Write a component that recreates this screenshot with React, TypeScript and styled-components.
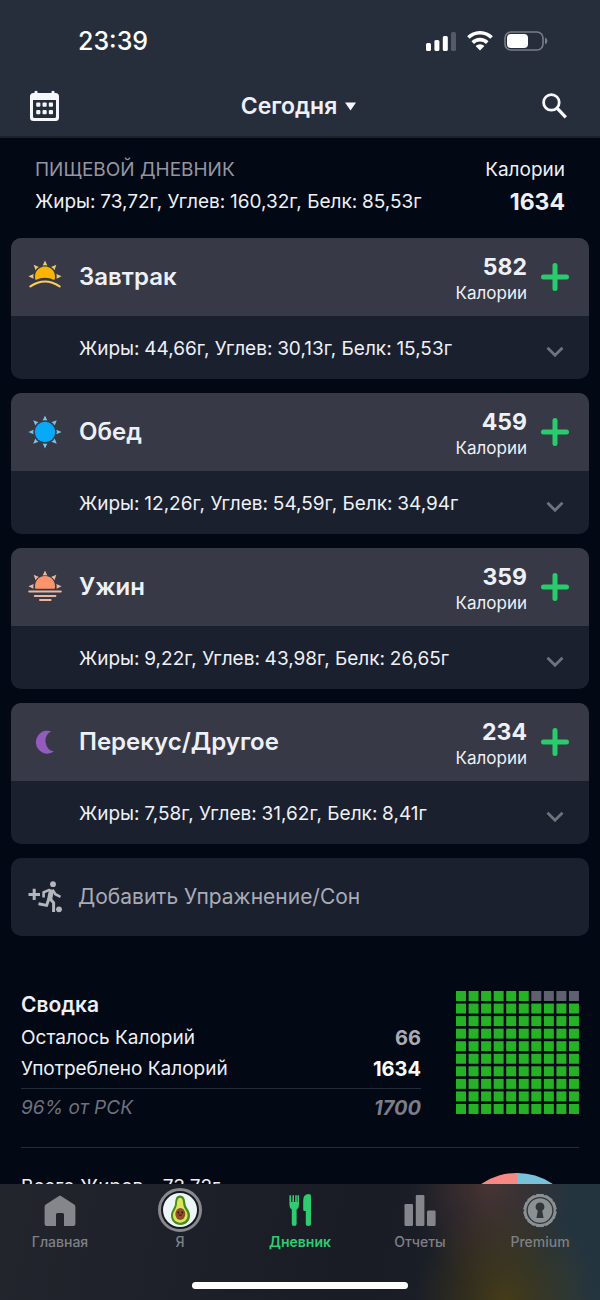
import React from "react";
import styled, { createGlobalStyle } from "styled-components";

const GlobalStyle = createGlobalStyle`
  * { box-sizing: border-box; }
  html, body, #root { height: 100%; }
  body {
    margin: 0;
    background: #020814;
    color: #eef0f8;
    font-family: Inter, "Liberation Sans", sans-serif;
    font-size: 19px;
    line-height: 24px;
  }
  button {
    margin: 0;
    padding: 0;
    border: 0;
    background: none;
    color: inherit;
    font: inherit;
    cursor: pointer;
  }
  svg { display: block; flex: none; }
  h1, h2, h3, p, dl, dd, dt { margin: 0; font: inherit; }
`;

const Screen = styled.div`
  display: flex;
  flex-direction: column;
  height: 100vh;
`;

const TopBar = styled.header`
  flex: none;
  background: #272e3b;
  border-bottom: 2px solid #1b212d;
`;

const StatusBar = styled.div`
  display: flex;
  align-items: center;
  justify-content: space-between;
  padding: 26px 52px 0 78px;
  height: 56px;
`;

const Clock = styled.time`
  font-size: 25px;
  line-height: 30px;
  font-weight: 500;
  color: #fff;
`;

const StatusIcons = styled.div`
  display: flex;
  align-items: center;
  gap: 11px;
`;

const Toolbar = styled.div`
  display: grid;
  grid-template-columns: 1fr auto 1fr;
  align-items: center;
  height: 80px;
  padding: 20px 33px 0 30px;
`;

const IconButton = styled.button<{ $end?: boolean }>`
  justify-self: ${(p) => (p.$end ? "end" : "start")};
`;

const DateButton = styled.button`
  display: flex;
  align-items: center;
  gap: 8px;
  font-size: 23px;
  line-height: 28px;
  font-weight: 600;
`;

const Scroll = styled.main`
  flex: 1;
  min-height: 0;
  overflow-y: auto;
  scrollbar-width: none;
`;

const DiaryHead = styled.section`
  display: flex;
  justify-content: space-between;
  padding: 20px 35px 24px;
`;

const HeadColumn = styled.div<{ $end?: boolean }>`
  display: flex;
  flex-direction: column;
  gap: 8px;
  text-align: ${(p) => (p.$end ? "right" : "left")};
`;

const Caption = styled.h2`
  color: #9496a1;
`;

const DayTotal = styled.p`
  font-size: 23px;
  font-weight: 700;
`;

const MealList = styled.div`
  display: flex;
  flex-direction: column;
  gap: 14px;
  padding: 0 11px;
`;

const Card = styled.section`
  overflow: hidden;
  border-radius: 10px;
  background: #1a202d;
`;

const CardHead = styled.div`
  display: flex;
  align-items: center;
  height: 78px;
  padding: 0 20px 0 17px;
  background: #373a46;
`;

const MealName = styled.h3`
  flex: 1;
  margin-left: 17px;
  font-size: 24px;
  line-height: 30px;
  font-weight: 600;
`;

const MealTotal = styled.div`
  padding-top: 4px;
  margin-right: 14px;
  text-align: right;
`;

const MealCalories = styled.p`
  font-size: 23px;
  line-height: 28px;
  font-weight: 700;
`;

const Unit = styled.p`
  font-size: 17px;
`;

const CardBody = styled.div`
  display: flex;
  align-items: center;
  justify-content: space-between;
  height: 63px;
  padding: 2px 25px 0 68px;
`;

const ExpandButton = styled.button`
  padding-top: 6px;
`;

const ExerciseButton = styled.button`
  display: flex;
  align-items: center;
  gap: 16px;
  height: 78px;
  padding: 0 17px;
  border-radius: 10px;
  background: #1a202d;
  color: #a9abb7;
  font-size: 21px;
  text-align: left;
`;

const Summary = styled.section`
  display: flex;
  gap: 35px;
  margin: 55px 21px 0;
  padding-bottom: 20px;
  border-bottom: 1px solid #262c38;
`;

const SummaryText = styled.div`
  flex: 1;
`;

const SummaryTitle = styled.h2`
  margin-bottom: 3px;
  font-size: 21px;
  line-height: 28px;
  font-weight: 600;
`;

const SummaryRow = styled.div<{ $muted?: boolean; $goal?: boolean }>`
  display: flex;
  align-items: center;
  justify-content: space-between;
  height: ${(p) => (p.$goal ? 39 : 31)}px;
  border-top: ${(p) => (p.$goal ? "1px solid #262c38" : "0")};
  margin-top: ${(p) => (p.$goal ? "4px" : "0")};
  color: ${(p) => (p.$goal ? "#6f727e" : "inherit")};
  font-style: ${(p) => (p.$goal ? "italic" : "normal")};

  dd {
    font-size: 20px;
    font-weight: 700;
    color: ${(p) => (p.$muted ? "#a9abb7" : p.$goal ? "#7b7d88" : "#fff")};
  }
`;

const Macros = styled.section`
  display: flex;
  justify-content: space-between;
  padding: 25px 21px 40px;
`;

const MacroTitle = styled.p`
  line-height: 28px;
`;

const TabBar = styled.nav`
  flex: none;
  background:
    radial-gradient(90px 100px at 505px 100%, rgba(78, 64, 18, 0.8), transparent),
    radial-gradient(80px 100px at 490px 0, rgba(90, 60, 54, 0.7), transparent),
    linear-gradient(90deg, transparent 78%, rgba(40, 62, 74, 0.65) 94%),
    linear-gradient(100deg, #22252c, #191c25 60%, #1c222b);
`;

const Tabs = styled.div`
  display: flex;
  height: 98px;
  padding-top: 4px;
`;

const Tab = styled.a<{ $active?: boolean }>`
  flex: 1;
  display: flex;
  flex-direction: column;
  align-items: center;
  color: ${(p) => (p.$active ? "#2ecc71" : "#7f8086")};
  font-size: 14px;
  line-height: 20px;
  font-weight: ${(p) => (p.$active ? 600 : 500)};
  text-decoration: none;
`;

const HomeIndicator = styled.div`
  width: 36%;
  height: 7px;
  margin: 0 auto 11px;
  border-radius: 4px;
  background: #fff;
`;

const SignalIcon = () => (
  <svg width="30" height="20" viewBox="0 0 30 20" fill="#fff" aria-hidden="true">
    <rect x="0" y="12" width="5" height="8" rx="1.5" />
    <rect x="8.4" y="9" width="5" height="11" rx="1.5" />
    <rect x="16.8" y="5" width="5" height="15" rx="1.5" />
    <rect x="25" y="1" width="5" height="19" rx="1.5" fill="#555a67" />
  </svg>
);

const WifiIcon = () => (
  <svg width="26" height="20" viewBox="0 0 26 20" fill="none" stroke="#fff" strokeWidth="3.6" aria-hidden="true">
    <path d="M1.4 6.6A16.4 16.4 0 0 1 24.6 6.6" />
    <path d="M5.7 11.6A10.4 10.4 0 0 1 20.3 11.6" />
    <path d="M13 19.4L8.6 15A6.2 6.2 0 0 1 17.4 15Z" fill="#fff" stroke="none" />
  </svg>
);

const BatteryIcon = () => (
  <svg width="44" height="20" viewBox="0 0 44 20" aria-hidden="true">
    <rect x="1" y="1" width="38" height="18" rx="6" fill="none" stroke="#797d88" strokeWidth="1.6" />
    <rect x="3" y="3" width="21" height="14" rx="4" fill="#fff" />
    <path d="M41 6.6Q43.4 7.6 43.4 10T41 13.4Z" fill="#797d88" />
  </svg>
);

const CalendarIcon = () => (
  <svg width="29" height="32" viewBox="0 0 29 32" fill="#f6f7fc" aria-hidden="true">
    <path
      fillRule="evenodd"
      d="M4.5 1.5Q6 0 7.5 1.5V3H21.5V1.5Q23 0 24.5 1.5V3H25.5Q29 3 29 6.5V27.5Q29 31 25.5 31H3.5Q0 31 0 27.5V6.5Q0 3 3.5 3H4.5ZM3 10V26.5Q3 28 4.5 28H24.5Q26 28 26 26.5V10Z"
    />
    {[6.2, 12.5, 18.8].map((x) =>
      [12.6, 20].map((y) => <rect key={`${x}-${y}`} x={x} y={y} width="4.2" height="4.2" rx="1" />)
    )}
  </svg>
);

const SearchIcon = () => (
  <svg width="25" height="26" viewBox="0 0 25 26" fill="none" stroke="#f6f7fc" strokeWidth="2.8" aria-hidden="true">
    <circle cx="9.4" cy="9.4" r="7.8" />
    <path d="M14.8 14.8L23.8 24.4" strokeWidth="3.2" />
  </svg>
);

const rays = (angles: number[], color: string) => (
  <g fill={color}>
    {angles.map((a) => (
      <path key={a} d="M17 .4L19.3 5.6Q17 4.8 14.7 5.6Z" transform={`rotate(${a} 17 17)`} />
    ))}
  </g>
);

const SunriseIcon = () => (
  <svg width="34" height="34" viewBox="0 0 34 34" aria-hidden="true">
    {rays([-87, -43, 0, 43, 87], "#e6cd72")}
    <path d="M7.6 20A10 10 0 1 1 26.4 20Q17 15.6 7.6 20Z" fill="#fdb400" />
    <path d="M2.4 26.4Q17 16.6 31.6 26.4" fill="none" stroke="#fbce5e" strokeWidth="2.2" strokeLinecap="round" />
  </svg>
);

const SunIcon = () => (
  <svg width="34" height="34" viewBox="0 0 34 34" aria-hidden="true">
    {rays([0, 45, 90, 135, 180, 225, 270, 315], "#7cc3e2")}
    <circle cx="17" cy="17" r="10.2" fill="#09a9fa" />
  </svg>
);

const SunsetIcon = () => (
  <svg width="34" height="34" viewBox="0 0 34 34" aria-hidden="true">
    {rays([-87, -43, 0, 43, 87], "#e8b9a6")}
    <path d="M7.4 18.8A10 10 0 1 1 26.6 18.8Z" fill="#fb946a" />
    <path d="M1.2 21.6H32.8M6.8 26H27.4M12 30H22.6" stroke="#e9b5a2" strokeWidth="2" strokeLinecap="round" />
  </svg>
);

const MoonIcon = () => (
  <svg width="34" height="34" viewBox="0 0 34 34" aria-hidden="true">
    <path d="M23.2 6.3A11.5 11.5 0 1 0 26 26.6A11 11 0 0 1 23.2 6.3Z" fill="#945bbf" />
  </svg>
);

const ExerciseIcon = () => (
  <svg width="34" height="34" viewBox="0 0 34 34" fill="none" stroke="#b4b6be" strokeWidth="3" aria-hidden="true">
    <path d="M.5 14.4H12M6.2 8.7V20" />
    <circle cx="25" cy="4.2" r="2.9" fill="#b4b6be" stroke="none" />
    <circle cx="31" cy="29.3" r="2.9" fill="#b4b6be" stroke="none" />
    <path d="M15.6 17.5V12.4L22 9.6" strokeWidth="2.6" />
    <path d="M23.6 9.4L21.6 19.5" strokeWidth="5" />
    <path d="M24.5 9.8L27.4 14.2L32.5 16.8" strokeWidth="2.6" />
    <path d="M21.4 18L25.6 22.8V32" />
    <path d="M21 18.5L18.6 25.4L10.5 23.8" />
  </svg>
);

const PlusIcon = () => (
  <svg width="28" height="28" viewBox="0 0 28 28" stroke="#2acb6c" strokeWidth="5" strokeLinecap="round" aria-hidden="true">
    <path d="M14 2.5V25.5M2.5 14H25.5" />
  </svg>
);

const ChevronIcon = () => (
  <svg width="18" height="12" viewBox="0 0 18 12" fill="none" stroke="#6f727d" strokeWidth="2.8" aria-hidden="true">
    <path d="M1.5 1.8L9 9.3L16.5 1.8" />
  </svg>
);

const HomeIcon = () => (
  <svg width="44" height="44" viewBox="0 0 44 44" fill="#85868b" aria-hidden="true">
    <path d="M21 8Q22 7 23 8L36.2 16.6Q37.4 17.5 37.4 19V36Q37.4 38 35.4 38H26V26.5Q26 25 24.5 25H19.5Q18 25 18 26.5V38H8.6Q6.6 38 6.6 36V19Q6.6 17.5 7.8 16.6Z" />
  </svg>
);

const AvatarIcon = () => (
  <svg width="44" height="44" viewBox="0 0 44 44" aria-hidden="true">
    <circle cx="22" cy="22" r="20.5" fill="#16191f" stroke="#88898f" strokeWidth="3" />
    <circle cx="22" cy="22" r="17" fill="#eef5f7" />
    <path d="M22 7.4C26.5 7.4 27 12 27.5 16C28 20 32 22 32 27.5C32 33 28 37 22.5 37C17 37 13 33 13 27.5C13 22.5 16.6 20 17 16C17.4 11.5 17.8 7.4 22 7.4Z" fill="#448c1d" />
    <path d="M22 9.8C24.6 9.8 25 13 25.3 16.5C25.8 21 29.6 23 29.6 27.6C29.6 31.8 26 34.7 22.3 34.7C18 34.7 15 31.8 15 27.6C15 23.4 18.4 21 18.9 16.5C19.2 12.8 19.6 9.8 22 9.8Z" fill="#dde45c" />
    <ellipse cx="22.3" cy="26" rx="5" ry="6" fill="#8d4d2b" />
    <path d="M20.8 26.5Q22.3 28.5 23.8 26.5" fill="none" stroke="#46201a" strokeWidth="1.2" />
    <circle cx="20.3" cy="24.5" r=".9" fill="#2d1410" />
    <circle cx="24.3" cy="24.5" r=".9" fill="#2d1410" />
  </svg>
);

const CutleryIcon = () => (
  <svg width="44" height="44" viewBox="0 0 44 44" fill="#2ecc71" aria-hidden="true">
    <path d="M11.4 8Q11.4 7 12.2 7T13 8V14H14.4V8Q14.4 7 15.2 7T16 8V14H17.2V8Q17.2 7 18 7T18.8 8V14H19.4V8Q19.4 7 20.2 7T21 8V17Q21 20 18.6 21.5V36Q18.6 38 16.2 38T13.8 36V21.5Q11.4 20 11.4 17Z" />
    <path d="M33 8V35.500Q33 38 30.400 38T27.800 35.500V23H26.400Q25.200 23 25.200 21.500V13Q25.200 6 30.600 6Q33 6 33 8Z" />
  </svg>
);

const ReportsIcon = () => (
  <svg width="44" height="44" viewBox="0 0 44 44" fill="#85868b" aria-hidden="true">
    <rect x="6.5" y="16" width="8.5" height="22" rx="1.3" />
    <rect x="17.8" y="7" width="8.6" height="31" rx="1.3" />
    <rect x="29" y="22.5" width="8.6" height="15.5" rx="1.3" />
  </svg>
);

const badge =
  Array.from({ length: 10 }, (_, i) => {
    const p = (deg: number, r: number) => {
      const t = (deg * Math.PI) / 180;
      return `${(22 + r * Math.sin(t)).toFixed(2)} ${(22.5 - r * Math.cos(t)).toFixed(2)}`;
    };
    return `${i ? "L" : "M"}${p(i * 36 - 12, 16.4)}L${p(i * 36 + 12, 16.4)}L${p(i * 36 + 18, 15.2)}`;
  }).join("") + "Z";

const PremiumIcon = () => (
  <svg width="44" height="44" viewBox="0 0 44 44" aria-hidden="true">
    <path d={badge} fill="#8b9193" stroke="#8b9193" strokeLinejoin="round" />
    <circle cx="22" cy="22.5" r="12.9" fill="none" stroke="#32373b" strokeWidth="1.4" />
    <path d="M22 14.5A4.400 4.400 0 0 1 24.200 22.700L25.600 30H18.400L19.800 22.700A4.400 4.400 0 0 1 22 14.500Z" fill="#32373b" />
  </svg>
);

const CalorieGrid = ({ filled }: { filled: number }) => (
  <svg width="123" height="123" viewBox="0 0 123 123" role="img" aria-label={`${filled}%`}>
    {Array.from({ length: 100 }, (_, i) => {
      const row = Math.floor(i / 10);
      const col = i % 10;
      const on = row > 0 || col < filled - 90;
      return <rect key={i} x={col * 12.55} y={row * 12.55} width="10" height="10" fill={on ? "#25b325" : "#606170"} />;
    })}
  </svg>
);

const MacroPie = () => (
  <svg width="124" height="124" viewBox="0 0 124 124" aria-hidden="true">
    <path d="M62 62V0A62 62 0 0 1 106 106Z" fill="#77c1da" />
    <path d="M62 62L106 106A62 62 0 0 1 18 106Z" fill="#c9a92c" />
    <path d="M62 62L18 106A62 62 0 0 1 62 0Z" fill="#f78883" />
  </svg>
);

const macros = (fat: string, carbs: string, protein: string) =>
  `Жиры:\u2005${fat}г, Углев:\u2005${carbs}г, Белк:\u2005${protein}г`;

const meals = [
  { name: "Завтрак", Icon: SunriseIcon, calories: 582, text: macros("44,66", "30,13", "15,53") },
  { name: "Обед", Icon: SunIcon, calories: 459, text: macros("12,26", "54,59", "34,94") },
  { name: "Ужин", Icon: SunsetIcon, calories: 359, text: macros("9,22", "43,98", "26,65") },
  { name: "Перекус/Другое", Icon: MoonIcon, calories: 234, text: macros("7,58", "31,62", "8,41") },
];

const tabs = [
  { label: "Главная", Icon: HomeIcon },
  { label: "Я", Icon: AvatarIcon },
  { label: "Дневник", Icon: CutleryIcon, active: true },
  { label: "Отчеты", Icon: ReportsIcon },
  { label: "Premium", Icon: PremiumIcon },
];

export default function App() {
  return (
    <Screen>
      <GlobalStyle />
      <TopBar>
        <StatusBar>
          <Clock>23:39</Clock>
          <StatusIcons>
            <SignalIcon />
            <WifiIcon />
            <BatteryIcon />
          </StatusIcons>
        </StatusBar>
        <Toolbar>
          <IconButton aria-label="Календарь"><CalendarIcon /></IconButton>
          <DateButton>
            Сегодня
            <svg width="11" height="9" viewBox="0 0 11 9" fill="#f6f7fc" aria-hidden="true">
              <path d="M0 .5H11L5.5 8.5Z" />
            </svg>
          </DateButton>
          <IconButton $end aria-label="Поиск"><SearchIcon /></IconButton>
        </Toolbar>
      </TopBar>

      <Scroll>
        <DiaryHead>
          <HeadColumn>
            <Caption>ПИЩЕВОЙ ДНЕВНИК</Caption>
            <p>{macros("73,72", "160,32", "85,53")}</p>
          </HeadColumn>
          <HeadColumn $end>
            <p>Калории</p>
            <DayTotal>1634</DayTotal>
          </HeadColumn>
        </DiaryHead>

        <MealList>
          {meals.map(({ name, Icon, calories, text }) => (
            <Card key={name}>
              <CardHead>
                <Icon />
                <MealName>{name}</MealName>
                <MealTotal>
                  <MealCalories>{calories}</MealCalories>
                  <Unit>Калории</Unit>
                </MealTotal>
                <button aria-label={`Добавить: ${name}`}><PlusIcon /></button>
              </CardHead>
              <CardBody>
                <p>{text}</p>
                <ExpandButton aria-label={`Развернуть: ${name}`}><ChevronIcon /></ExpandButton>
              </CardBody>
            </Card>
          ))}
          <ExerciseButton>
            <ExerciseIcon />
            Добавить Упражнение/Сон
          </ExerciseButton>
        </MealList>

        <Summary>
          <SummaryText>
            <SummaryTitle>Сводка</SummaryTitle>
            <dl>
              <SummaryRow $muted><dt>Осталось Калорий</dt><dd>66</dd></SummaryRow>
              <SummaryRow><dt>Употреблено Калорий</dt><dd>1634</dd></SummaryRow>
              <SummaryRow $goal><dt>96% от РСК</dt><dd>1700</dd></SummaryRow>
            </dl>
          </SummaryText>
          <CalorieGrid filled={96} />
        </Summary>

        <Macros>
          <MacroTitle>Всего Жиров - 73,72г</MacroTitle>
          <MacroPie />
        </Macros>
      </Scroll>

      <TabBar>
        <Tabs>
          {tabs.map(({ label, Icon, active }) => (
            <Tab key={label} href="#" $active={active} aria-current={active ? "page" : undefined}>
              <Icon />
              {label}
            </Tab>
          ))}
        </Tabs>
        <HomeIndicator />
      </TabBar>
    </Screen>
  );
}
